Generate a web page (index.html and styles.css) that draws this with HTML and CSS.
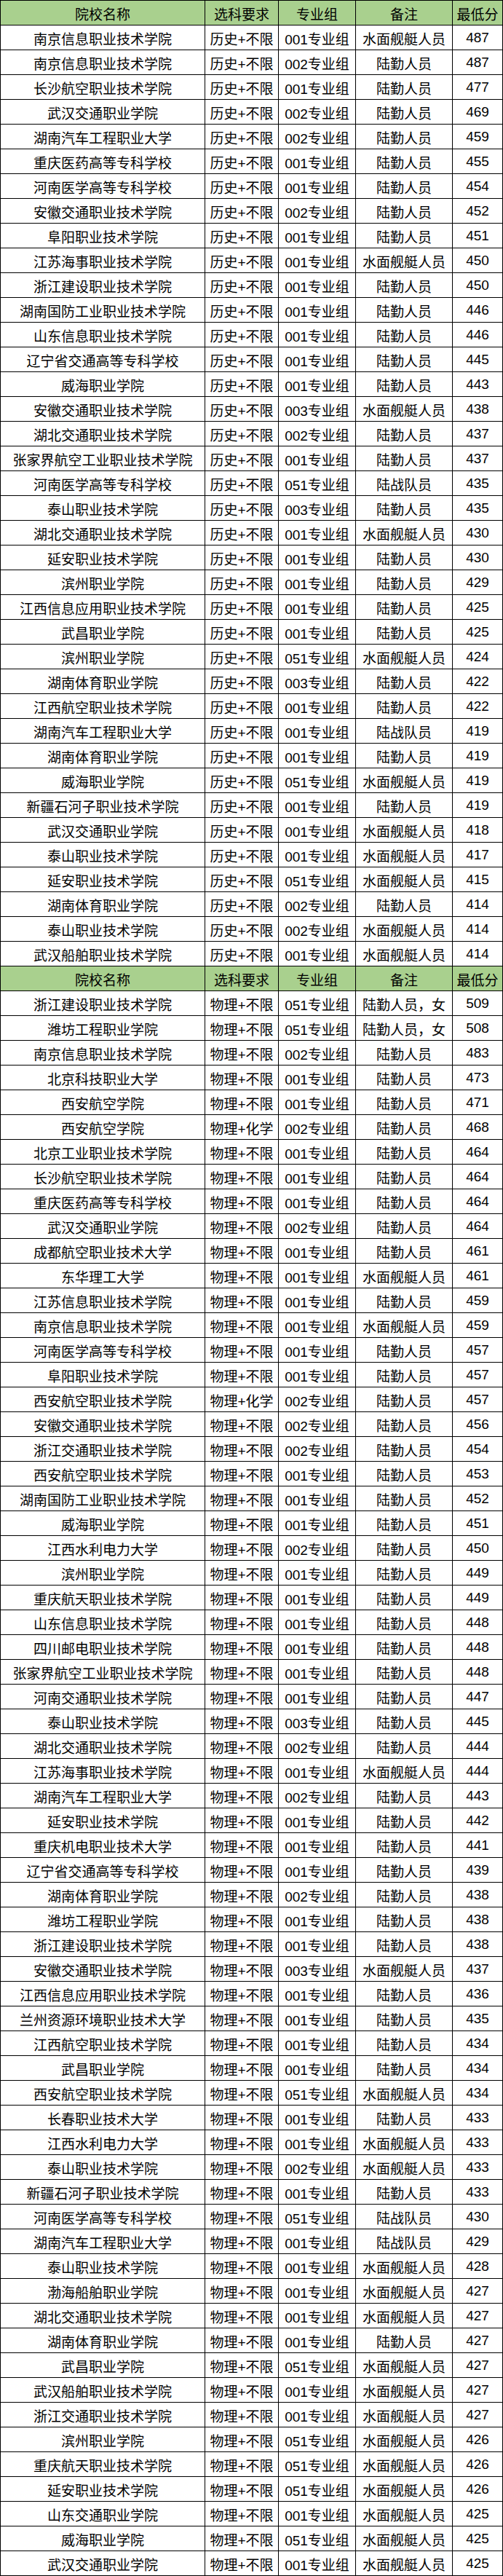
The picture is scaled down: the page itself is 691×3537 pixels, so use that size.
FILE: index.html
```html
<!DOCTYPE html>
<html lang="zh-CN">
<head>
<meta charset="utf-8">
<title>院校最低分</title>
<link rel="stylesheet" href="styles.css">
</head>
<body>
<div class="sheet">
<div class="row head"><span>院校名称</span><span>选科要求</span><span>专业组</span><span>备注</span><span>最低分</span></div>
<div class="row"><span>南京信息职业技术学院</span><span>历史+不限</span><span>001专业组</span><span>水面舰艇人员</span><span>487</span></div>
<div class="row"><span>南京信息职业技术学院</span><span>历史+不限</span><span>002专业组</span><span>陆勤人员</span><span>487</span></div>
<div class="row"><span>长沙航空职业技术学院</span><span>历史+不限</span><span>001专业组</span><span>陆勤人员</span><span>477</span></div>
<div class="row"><span>武汉交通职业学院</span><span>历史+不限</span><span>002专业组</span><span>陆勤人员</span><span>469</span></div>
<div class="row"><span>湖南汽车工程职业大学</span><span>历史+不限</span><span>002专业组</span><span>陆勤人员</span><span>459</span></div>
<div class="row"><span>重庆医药高等专科学校</span><span>历史+不限</span><span>001专业组</span><span>陆勤人员</span><span>455</span></div>
<div class="row"><span>河南医学高等专科学校</span><span>历史+不限</span><span>001专业组</span><span>陆勤人员</span><span>454</span></div>
<div class="row"><span>安徽交通职业技术学院</span><span>历史+不限</span><span>002专业组</span><span>陆勤人员</span><span>452</span></div>
<div class="row"><span>阜阳职业技术学院</span><span>历史+不限</span><span>001专业组</span><span>陆勤人员</span><span>451</span></div>
<div class="row"><span>江苏海事职业技术学院</span><span>历史+不限</span><span>001专业组</span><span>水面舰艇人员</span><span>450</span></div>
<div class="row"><span>浙江建设职业技术学院</span><span>历史+不限</span><span>001专业组</span><span>陆勤人员</span><span>450</span></div>
<div class="row"><span>湖南国防工业职业技术学院</span><span>历史+不限</span><span>001专业组</span><span>陆勤人员</span><span>446</span></div>
<div class="row"><span>山东信息职业技术学院</span><span>历史+不限</span><span>001专业组</span><span>陆勤人员</span><span>446</span></div>
<div class="row"><span>辽宁省交通高等专科学校</span><span>历史+不限</span><span>001专业组</span><span>陆勤人员</span><span>445</span></div>
<div class="row"><span>威海职业学院</span><span>历史+不限</span><span>001专业组</span><span>陆勤人员</span><span>443</span></div>
<div class="row"><span>安徽交通职业技术学院</span><span>历史+不限</span><span>003专业组</span><span>水面舰艇人员</span><span>438</span></div>
<div class="row"><span>湖北交通职业技术学院</span><span>历史+不限</span><span>002专业组</span><span>陆勤人员</span><span>437</span></div>
<div class="row"><span>张家界航空工业职业技术学院</span><span>历史+不限</span><span>001专业组</span><span>陆勤人员</span><span>437</span></div>
<div class="row"><span>河南医学高等专科学校</span><span>历史+不限</span><span>051专业组</span><span>陆战队员</span><span>435</span></div>
<div class="row"><span>泰山职业技术学院</span><span>历史+不限</span><span>003专业组</span><span>陆勤人员</span><span>435</span></div>
<div class="row"><span>湖北交通职业技术学院</span><span>历史+不限</span><span>001专业组</span><span>水面舰艇人员</span><span>430</span></div>
<div class="row"><span>延安职业技术学院</span><span>历史+不限</span><span>001专业组</span><span>陆勤人员</span><span>430</span></div>
<div class="row"><span>滨州职业学院</span><span>历史+不限</span><span>001专业组</span><span>陆勤人员</span><span>429</span></div>
<div class="row"><span>江西信息应用职业技术学院</span><span>历史+不限</span><span>001专业组</span><span>陆勤人员</span><span>425</span></div>
<div class="row"><span>武昌职业学院</span><span>历史+不限</span><span>001专业组</span><span>陆勤人员</span><span>425</span></div>
<div class="row"><span>滨州职业学院</span><span>历史+不限</span><span>051专业组</span><span>水面舰艇人员</span><span>424</span></div>
<div class="row"><span>湖南体育职业学院</span><span>历史+不限</span><span>003专业组</span><span>陆勤人员</span><span>422</span></div>
<div class="row"><span>江西航空职业技术学院</span><span>历史+不限</span><span>001专业组</span><span>陆勤人员</span><span>422</span></div>
<div class="row"><span>湖南汽车工程职业大学</span><span>历史+不限</span><span>001专业组</span><span>陆战队员</span><span>419</span></div>
<div class="row"><span>湖南体育职业学院</span><span>历史+不限</span><span>001专业组</span><span>陆勤人员</span><span>419</span></div>
<div class="row"><span>威海职业学院</span><span>历史+不限</span><span>051专业组</span><span>水面舰艇人员</span><span>419</span></div>
<div class="row"><span>新疆石河子职业技术学院</span><span>历史+不限</span><span>001专业组</span><span>陆勤人员</span><span>419</span></div>
<div class="row"><span>武汉交通职业学院</span><span>历史+不限</span><span>001专业组</span><span>水面舰艇人员</span><span>418</span></div>
<div class="row"><span>泰山职业技术学院</span><span>历史+不限</span><span>001专业组</span><span>水面舰艇人员</span><span>417</span></div>
<div class="row"><span>延安职业技术学院</span><span>历史+不限</span><span>051专业组</span><span>水面舰艇人员</span><span>415</span></div>
<div class="row"><span>湖南体育职业学院</span><span>历史+不限</span><span>002专业组</span><span>陆勤人员</span><span>414</span></div>
<div class="row"><span>泰山职业技术学院</span><span>历史+不限</span><span>002专业组</span><span>水面舰艇人员</span><span>414</span></div>
<div class="row"><span>武汉船舶职业技术学院</span><span>历史+不限</span><span>001专业组</span><span>水面舰艇人员</span><span>414</span></div>
<div class="row head"><span>院校名称</span><span>选科要求</span><span>专业组</span><span>备注</span><span>最低分</span></div>
<div class="row"><span>浙江建设职业技术学院</span><span>物理+不限</span><span>051专业组</span><span>陆勤人员，女</span><span>509</span></div>
<div class="row"><span>潍坊工程职业学院</span><span>物理+不限</span><span>051专业组</span><span>陆勤人员，女</span><span>508</span></div>
<div class="row"><span>南京信息职业技术学院</span><span>物理+不限</span><span>002专业组</span><span>陆勤人员</span><span>483</span></div>
<div class="row"><span>北京科技职业大学</span><span>物理+不限</span><span>001专业组</span><span>陆勤人员</span><span>473</span></div>
<div class="row"><span>西安航空学院</span><span>物理+不限</span><span>001专业组</span><span>陆勤人员</span><span>471</span></div>
<div class="row"><span>西安航空学院</span><span>物理+化学</span><span>002专业组</span><span>陆勤人员</span><span>468</span></div>
<div class="row"><span>北京工业职业技术学院</span><span>物理+不限</span><span>001专业组</span><span>陆勤人员</span><span>464</span></div>
<div class="row"><span>长沙航空职业技术学院</span><span>物理+不限</span><span>001专业组</span><span>陆勤人员</span><span>464</span></div>
<div class="row"><span>重庆医药高等专科学校</span><span>物理+不限</span><span>001专业组</span><span>陆勤人员</span><span>464</span></div>
<div class="row"><span>武汉交通职业学院</span><span>物理+不限</span><span>002专业组</span><span>陆勤人员</span><span>464</span></div>
<div class="row"><span>成都航空职业技术大学</span><span>物理+不限</span><span>001专业组</span><span>陆勤人员</span><span>461</span></div>
<div class="row"><span>东华理工大学</span><span>物理+不限</span><span>001专业组</span><span>水面舰艇人员</span><span>461</span></div>
<div class="row"><span>江苏信息职业技术学院</span><span>物理+不限</span><span>001专业组</span><span>陆勤人员</span><span>459</span></div>
<div class="row"><span>南京信息职业技术学院</span><span>物理+不限</span><span>001专业组</span><span>水面舰艇人员</span><span>459</span></div>
<div class="row"><span>河南医学高等专科学校</span><span>物理+不限</span><span>001专业组</span><span>陆勤人员</span><span>457</span></div>
<div class="row"><span>阜阳职业技术学院</span><span>物理+不限</span><span>001专业组</span><span>陆勤人员</span><span>457</span></div>
<div class="row"><span>西安航空职业技术学院</span><span>物理+化学</span><span>002专业组</span><span>陆勤人员</span><span>457</span></div>
<div class="row"><span>安徽交通职业技术学院</span><span>物理+不限</span><span>002专业组</span><span>陆勤人员</span><span>456</span></div>
<div class="row"><span>浙江交通职业技术学院</span><span>物理+不限</span><span>002专业组</span><span>陆勤人员</span><span>454</span></div>
<div class="row"><span>西安航空职业技术学院</span><span>物理+不限</span><span>001专业组</span><span>陆勤人员</span><span>453</span></div>
<div class="row"><span>湖南国防工业职业技术学院</span><span>物理+不限</span><span>001专业组</span><span>陆勤人员</span><span>452</span></div>
<div class="row"><span>威海职业学院</span><span>物理+不限</span><span>001专业组</span><span>陆勤人员</span><span>451</span></div>
<div class="row"><span>江西水利电力大学</span><span>物理+不限</span><span>002专业组</span><span>陆勤人员</span><span>450</span></div>
<div class="row"><span>滨州职业学院</span><span>物理+不限</span><span>001专业组</span><span>陆勤人员</span><span>449</span></div>
<div class="row"><span>重庆航天职业技术学院</span><span>物理+不限</span><span>001专业组</span><span>陆勤人员</span><span>449</span></div>
<div class="row"><span>山东信息职业技术学院</span><span>物理+不限</span><span>001专业组</span><span>陆勤人员</span><span>448</span></div>
<div class="row"><span>四川邮电职业技术学院</span><span>物理+不限</span><span>001专业组</span><span>陆勤人员</span><span>448</span></div>
<div class="row"><span>张家界航空工业职业技术学院</span><span>物理+不限</span><span>001专业组</span><span>陆勤人员</span><span>448</span></div>
<div class="row"><span>河南交通职业技术学院</span><span>物理+不限</span><span>001专业组</span><span>陆勤人员</span><span>447</span></div>
<div class="row"><span>泰山职业技术学院</span><span>物理+不限</span><span>003专业组</span><span>陆勤人员</span><span>445</span></div>
<div class="row"><span>湖北交通职业技术学院</span><span>物理+不限</span><span>002专业组</span><span>陆勤人员</span><span>444</span></div>
<div class="row"><span>江苏海事职业技术学院</span><span>物理+不限</span><span>001专业组</span><span>水面舰艇人员</span><span>444</span></div>
<div class="row"><span>湖南汽车工程职业大学</span><span>物理+不限</span><span>002专业组</span><span>陆勤人员</span><span>443</span></div>
<div class="row"><span>延安职业技术学院</span><span>物理+不限</span><span>001专业组</span><span>陆勤人员</span><span>442</span></div>
<div class="row"><span>重庆机电职业技术大学</span><span>物理+不限</span><span>001专业组</span><span>陆勤人员</span><span>441</span></div>
<div class="row"><span>辽宁省交通高等专科学校</span><span>物理+不限</span><span>001专业组</span><span>陆勤人员</span><span>439</span></div>
<div class="row"><span>湖南体育职业学院</span><span>物理+不限</span><span>002专业组</span><span>陆勤人员</span><span>438</span></div>
<div class="row"><span>潍坊工程职业学院</span><span>物理+不限</span><span>001专业组</span><span>陆勤人员</span><span>438</span></div>
<div class="row"><span>浙江建设职业技术学院</span><span>物理+不限</span><span>001专业组</span><span>陆勤人员</span><span>438</span></div>
<div class="row"><span>安徽交通职业技术学院</span><span>物理+不限</span><span>003专业组</span><span>水面舰艇人员</span><span>437</span></div>
<div class="row"><span>江西信息应用职业技术学院</span><span>物理+不限</span><span>001专业组</span><span>陆勤人员</span><span>436</span></div>
<div class="row"><span>兰州资源环境职业技术大学</span><span>物理+不限</span><span>001专业组</span><span>陆勤人员</span><span>435</span></div>
<div class="row"><span>江西航空职业技术学院</span><span>物理+不限</span><span>001专业组</span><span>陆勤人员</span><span>434</span></div>
<div class="row"><span>武昌职业学院</span><span>物理+不限</span><span>001专业组</span><span>陆勤人员</span><span>434</span></div>
<div class="row"><span>西安航空职业技术学院</span><span>物理+不限</span><span>051专业组</span><span>水面舰艇人员</span><span>434</span></div>
<div class="row"><span>长春职业技术大学</span><span>物理+不限</span><span>001专业组</span><span>陆勤人员</span><span>433</span></div>
<div class="row"><span>江西水利电力大学</span><span>物理+不限</span><span>001专业组</span><span>水面舰艇人员</span><span>433</span></div>
<div class="row"><span>泰山职业技术学院</span><span>物理+不限</span><span>002专业组</span><span>水面舰艇人员</span><span>433</span></div>
<div class="row"><span>新疆石河子职业技术学院</span><span>物理+不限</span><span>001专业组</span><span>陆勤人员</span><span>433</span></div>
<div class="row"><span>河南医学高等专科学校</span><span>物理+不限</span><span>051专业组</span><span>陆战队员</span><span>430</span></div>
<div class="row"><span>湖南汽车工程职业大学</span><span>物理+不限</span><span>001专业组</span><span>陆战队员</span><span>429</span></div>
<div class="row"><span>泰山职业技术学院</span><span>物理+不限</span><span>001专业组</span><span>水面舰艇人员</span><span>428</span></div>
<div class="row"><span>渤海船舶职业学院</span><span>物理+不限</span><span>001专业组</span><span>水面舰艇人员</span><span>427</span></div>
<div class="row"><span>湖北交通职业技术学院</span><span>物理+不限</span><span>001专业组</span><span>水面舰艇人员</span><span>427</span></div>
<div class="row"><span>湖南体育职业学院</span><span>物理+不限</span><span>001专业组</span><span>陆勤人员</span><span>427</span></div>
<div class="row"><span>武昌职业学院</span><span>物理+不限</span><span>051专业组</span><span>水面舰艇人员</span><span>427</span></div>
<div class="row"><span>武汉船舶职业技术学院</span><span>物理+不限</span><span>001专业组</span><span>水面舰艇人员</span><span>427</span></div>
<div class="row"><span>浙江交通职业技术学院</span><span>物理+不限</span><span>001专业组</span><span>水面舰艇人员</span><span>427</span></div>
<div class="row"><span>滨州职业学院</span><span>物理+不限</span><span>051专业组</span><span>水面舰艇人员</span><span>426</span></div>
<div class="row"><span>重庆航天职业技术学院</span><span>物理+不限</span><span>051专业组</span><span>水面舰艇人员</span><span>426</span></div>
<div class="row"><span>延安职业技术学院</span><span>物理+不限</span><span>051专业组</span><span>水面舰艇人员</span><span>426</span></div>
<div class="row"><span>山东交通职业学院</span><span>物理+不限</span><span>001专业组</span><span>水面舰艇人员</span><span>425</span></div>
<div class="row"><span>威海职业学院</span><span>物理+不限</span><span>051专业组</span><span>水面舰艇人员</span><span>425</span></div>
<div class="row"><span>武汉交通职业学院</span><span>物理+不限</span><span>001专业组</span><span>水面舰艇人员</span><span>425</span></div>
</div>
</body>
</html>
```
FILE: styles.css
```css
html, body {
  margin: 0;
  padding: 0;
  background: #ffffff;
}

body {
  font-family: "Liberation Sans", "Noto Sans CJK SC", sans-serif;
  font-size: 19px;
  color: #000000;
}

.sheet {
  width: 691px;
  box-sizing: border-box;
  border-left: 1px solid #000000;
  border-top: 1px solid #000000;
}

.row {
  display: grid;
  grid-template-columns: 281px 101px 106px 133px 69px;
}

.row > span {
  box-sizing: border-box;
  height: 34px;
  border-right: 1px solid #000000;
  border-bottom: 1px solid #000000;
  display: flex;
  align-items: center;
  justify-content: center;
  padding-top: 1px;
  white-space: nowrap;
  overflow: hidden;
}

.row.head > span {
  background: #a9d08e;
}
```
